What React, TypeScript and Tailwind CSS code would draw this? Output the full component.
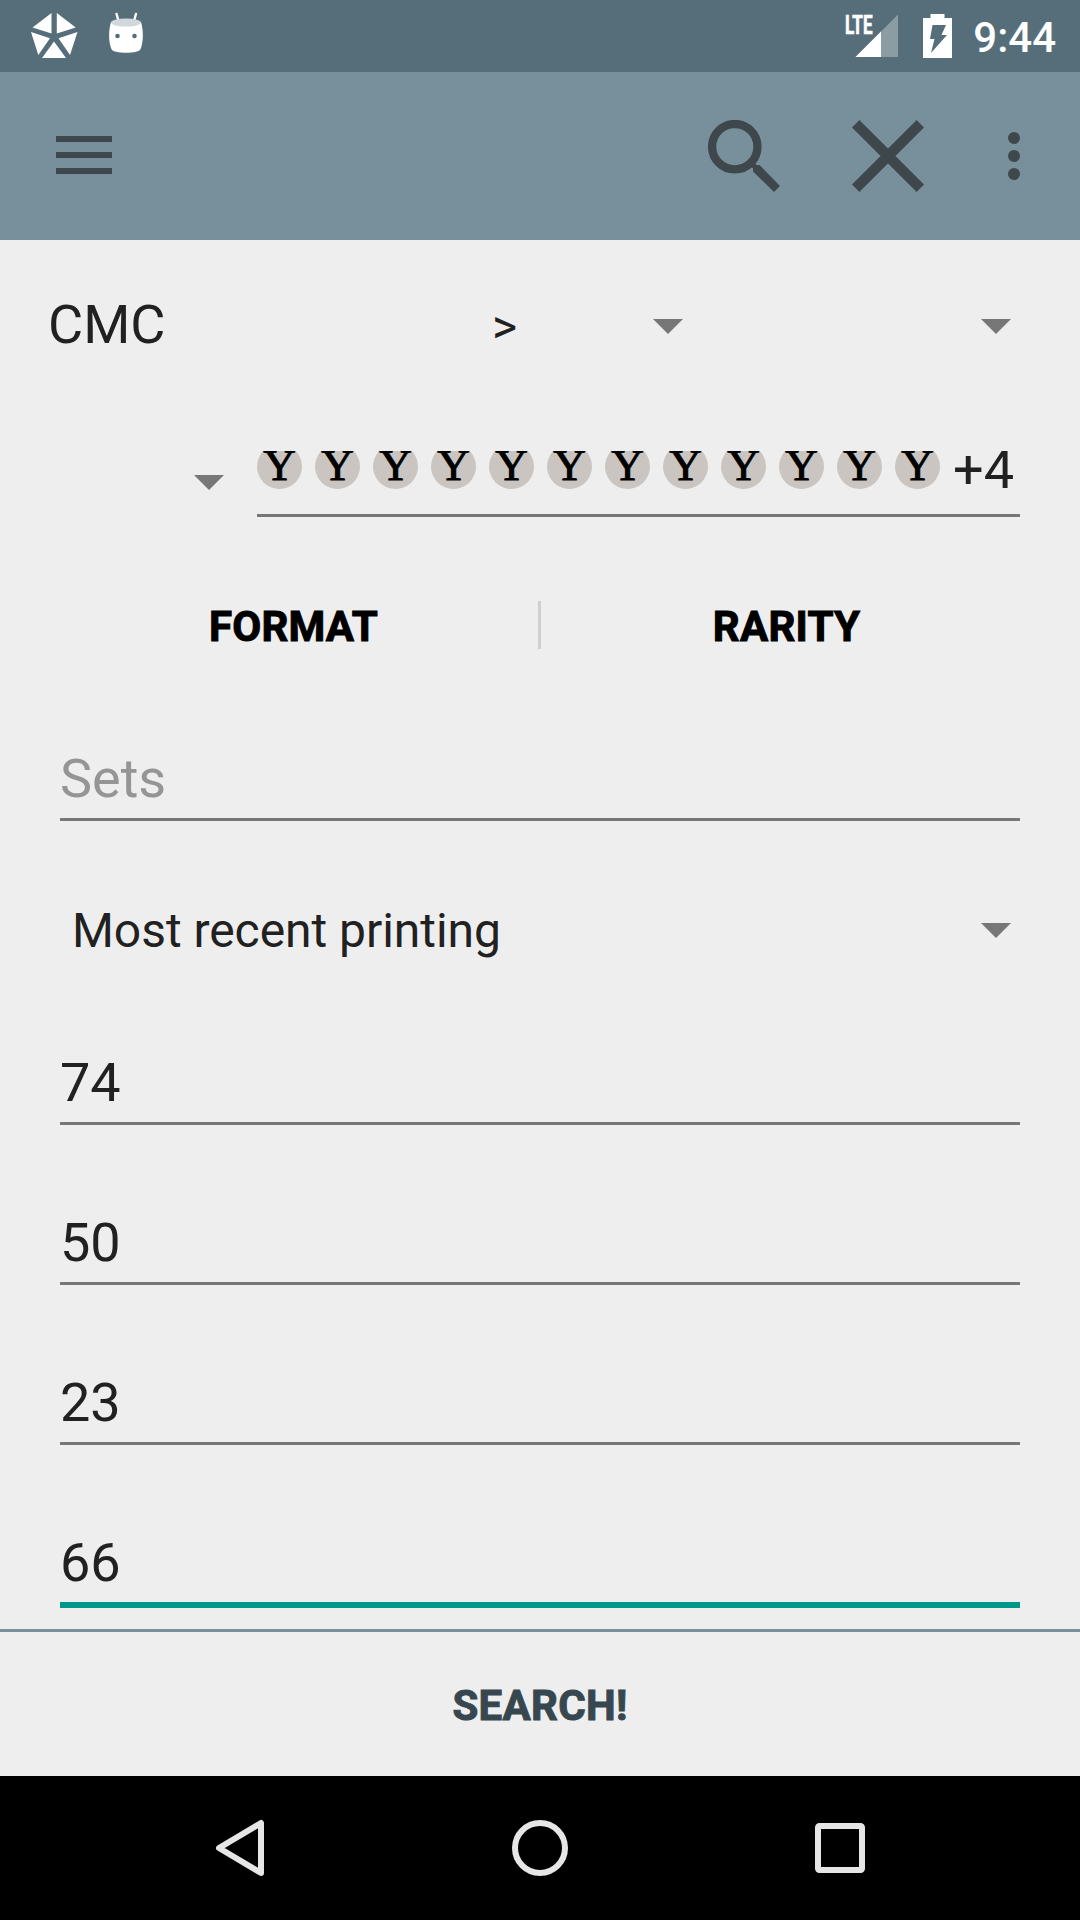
import React from "react";

const manaSymbols = Array.from({ length: 12 }, (_, i) => i);

function DropArrow({ className = "" }: { className?: string }) {
  return (
    <svg className={`h-[15px] w-[30px] shrink-0 ${className}`} viewBox="0 0 30 15">
      <path d="M0 0h30L15 15z" fill="#777777" />
    </svg>
  );
}

function StatusBar() {
  return (
    <header className="flex h-[72px] shrink-0 items-center bg-[#566e79] text-white">
      <svg className="ml-[30px] h-[48px] w-[48px]" viewBox="30 12 48 48" fill="#fff">
        <path d="M51.5 13v20.5L32.5 27.5zM56.8 13v20.5L75.7 27.5zM31 32l19 6.2L38.3 55zM77.5 32l-19 6.2L70 55zM54 41.5 66 58H42z" />
      </svg>
      <svg className="ml-[30px] h-[48px] w-[36px]" viewBox="108 12 36 48">
        <path d="M116.500 13.900 118.500 21M136 13.900 134 21" stroke="#fff" strokeWidth="2.400" strokeLinecap="round" />
        <path d="M111 22c-2.500 8-2.500 19 0 26 .8 2.500 2 3.200 5 3.700 6 1.300 14 1.300 20 0 3-.5 4.200-1.200 5-3.700 2.500-7 2.500-18 0-26z" fill="#fff" />
        <ellipse cx="126" cy="22.600" rx="15" ry="4" fill="#d0d8db" />
        <circle cx="117.500" cy="36" r="2.300" fill="#566e79" />
        <circle cx="134.500" cy="36" r="2.300" fill="#566e79" />
      </svg>
      <div className="ml-auto flex h-full items-center">
        <svg className="h-[60px] w-[59px] overflow-visible" viewBox="840 6 59 60">
          <path d="M855.500 57 898 14.500V57z" fill="#8b9ca3" />
          <path d="M855.500 57 881 31.500V57z" fill="#fff" />
          <text
            x="845"
            y="33.500"
            fill="#fff"
            stroke="#fff"
            strokeWidth="0.700"
            fontFamily="Roboto"
            fontWeight="700"
            fontSize="26"
            textLength="27.500"
            lengthAdjust="spacingAndGlyphs"
          >
            LTE
          </text>
        </svg>
        <svg className="ml-[24px] h-[46px] w-[30px]" viewBox="0 0 30 46">
          <path d="M7.500 1h14v4H29v40H0V5h7.500z" fill="#fff" />
          <path d="M9.500 12H23l-4.500 10H24L8 40l3.500-14H7z" fill="#566e79" />
        </svg>
        <span className="ml-[20px] mr-[24px] mt-[4px] text-[42px] font-medium leading-[60px]">9:44</span>
      </div>
    </header>
  );
}

function Toolbar() {
  return (
    <div className="flex h-[168px] shrink-0 items-center bg-[#78909c]">
      <div className="ml-14 flex w-14 flex-col gap-2.5 pb-[12px] pt-[10px]">
        <span className="h-1.5 bg-[#3e474c]" />
        <span className="h-1.5 bg-[#3e474c]" />
        <span className="h-1.5 bg-[#3e474c]" />
      </div>
      <svg className="ml-auto h-[72px] w-[72px]" viewBox="708 120 72 72">
        <circle cx="734.800" cy="146.700" r="22.700" fill="none" stroke="#3e474c" strokeWidth="8.300" />
        <path d="M753 165h6.500L780 186l-6 6-21-20.500z" fill="#3e474c" />
        <path d="m750 162 6 6" stroke="#3e474c" strokeWidth="5" />
      </svg>
      <svg className="ml-[72px] h-[72px] w-[72px]" viewBox="0 0 72 72">
        <path d="M3.700 3.700 68.300 68.300M68.300 3.700 3.700 68.300" stroke="#3e474c" strokeWidth="10.400" />
      </svg>
      <div className="ml-[84px] mr-[60px] flex flex-col gap-1.5">
        <span className="h-3 w-3 rounded-full bg-[#3e474c]" />
        <span className="h-3 w-3 rounded-full bg-[#3e474c]" />
        <span className="h-3 w-3 rounded-full bg-[#3e474c]" />
      </div>
    </div>
  );
}

function NumberField({ value, height, focused = false }: { value: string; height: string; focused?: boolean }) {
  return (
    <div className={`mx-[60px] flex shrink-0 items-end text-[54px] leading-[79px] ${height} ${focused ? "border-b-[6px] border-[#009688]" : "border-b-[3px] border-[#777777]"}`}>
      {value}
    </div>
  );
}

function NavBar() {
  return (
    <nav className="flex h-[144px] shrink-0 items-center justify-center gap-[240px] bg-black">
      <svg className="h-[60px] w-[60px]" viewBox="0 0 60 60" fill="none" stroke="#e6e6e6" strokeWidth="6" strokeLinejoin="round">
        <path d="M51 5v50L9 30z" />
      </svg>
      <svg className="h-[60px] w-[60px]" viewBox="0 0 60 60" fill="none" stroke="#e6e6e6" strokeWidth="6">
        <circle cx="30" cy="30" r="25" />
      </svg>
      <svg className="h-[60px] w-[60px]" viewBox="0 0 60 60" fill="none" stroke="#e6e6e6" strokeWidth="6" strokeLinejoin="round">
        <rect x="8" y="8" width="44" height="44" rx="1.500" />
      </svg>
    </nav>
  );
}

export default function App() {
  return (
    <div className="flex h-[1920px] w-[1080px] flex-col overflow-hidden bg-[#eeeeee] font-['Roboto',sans-serif] text-[#212121]">
      <StatusBar />
      <Toolbar />
      <main className="flex h-[1389px] shrink-0 flex-col">
        <div className="flex h-[168px] shrink-0 items-center">
          <span className="w-[444px] pl-12 pt-[2px] text-[54px] leading-[74px]">CMC</span>
          <span className="w-[209px] pl-[48px] pt-[6px] text-[48px] leading-[72px]">&gt;</span>
          <DropArrow className="mt-[5px]" />
          <DropArrow className="ml-auto mr-[69px] mt-[5px]" />
        </div>
        <div className="flex h-[109px] shrink-0">
          <DropArrow className="ml-[194px] mt-[67px]" />
          <div className="ml-[33px] flex w-[763px] flex-col justify-end border-b-[3px] border-[#777777]">
            <div className="mb-[14px] flex h-[49px] items-start overflow-hidden">
              {manaSymbols.map((i) => (
                <span
                  key={i}
                  className="-mt-[7px] mr-[13px] flex h-[45px] w-[45px] shrink-0 items-center justify-center rounded-full bg-[#cac5c0] pb-[2px] font-['Liberation_Serif',serif] text-[45px] leading-[41px] text-black [-webkit-text-stroke:1px_black]"
                >
                  Y
                </span>
              ))}
              <span className="-mt-[13px] text-[54px] leading-[63px]">+4</span>
            </div>
          </div>
        </div>
        <div className="flex h-[216px] shrink-0 items-center text-[42px] font-bold text-black">
          <span className="ml-12 w-[490px] pl-[1px] pt-[2px] text-center tracking-[0.2px] [-webkit-text-stroke:1px_black]">FORMAT</span>
          <span className="h-12 w-[3px] bg-[#d0d0d0]" />
          <span className="w-[491px] pt-[2px] text-center tracking-[0.2px] [-webkit-text-stroke:1px_black]">RARITY</span>
        </div>
        <div className="mx-[60px] flex h-[88px] shrink-0 items-end border-b-[3px] border-[#777777] text-[54px] leading-[79px] text-[#959595]">
          Sets
        </div>
        <div className="flex h-[218px] shrink-0 items-center">
          <span className="pl-[72px] pt-[2px] text-[48px] leading-[72px] tracking-[-0.05px]">Most recent printing</span>
          <DropArrow className="ml-auto mr-[69px]" />
        </div>
        <NumberField value="74" height="h-[86px]" />
        <NumberField value="50" height="h-[160px]" />
        <NumberField value="23" height="h-[160px]" />
        <NumberField value="66" height="h-[163px]" focused />
      </main>
      <button className="flex h-[147px] shrink-0 items-center justify-center border-t-[3px] border-[#78909c] pt-[2px] text-[42px] font-bold tracking-[0.3px] text-[#37474f] [-webkit-text-stroke:1px_#37474f]">
        SEARCH!
      </button>
      <NavBar />
    </div>
  );
}
